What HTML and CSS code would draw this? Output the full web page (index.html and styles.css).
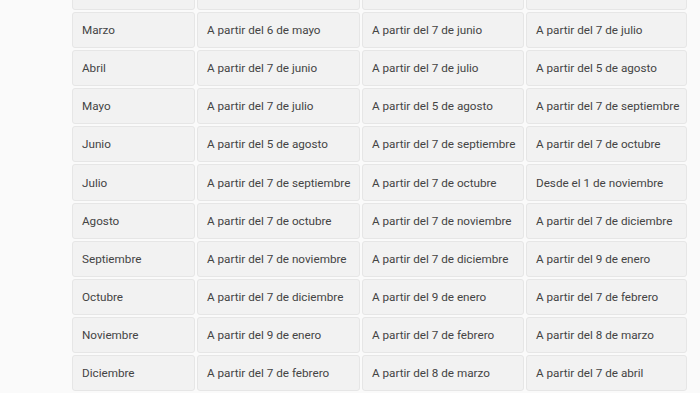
FILE: index.html
```html
<!DOCTYPE html>
<html lang="es">
<head>
<meta charset="utf-8">
<title>Calendario</title>
<link rel="stylesheet" href="styles.css">
</head>
<body>
<div class="page">
  <div class="grid">
    <div class="cell"></div><div class="cell"></div><div class="cell"></div><div class="cell"></div>
    <div class="cell">Marzo</div><div class="cell">A partir del 6 de mayo</div><div class="cell">A partir del 7 de junio</div><div class="cell">A partir del 7 de julio</div>
    <div class="cell">Abril</div><div class="cell">A partir del 7 de junio</div><div class="cell">A partir del 7 de julio</div><div class="cell">A partir del 5 de agosto</div>
    <div class="cell">Mayo</div><div class="cell">A partir del 7 de julio</div><div class="cell">A partir del 5 de agosto</div><div class="cell">A partir del 7 de septiembre</div>
    <div class="cell">Junio</div><div class="cell">A partir del 5 de agosto</div><div class="cell">A partir del 7 de septiembre</div><div class="cell">A partir del 7 de octubre</div>
    <div class="cell">Julio</div><div class="cell">A partir del 7 de septiembre</div><div class="cell">A partir del 7 de octubre</div><div class="cell">Desde el 1 de noviembre</div>
    <div class="cell">Agosto</div><div class="cell">A partir del 7 de octubre</div><div class="cell">A partir del 7 de noviembre</div><div class="cell">A partir del 7 de diciembre</div>
    <div class="cell">Septiembre</div><div class="cell">A partir del 7 de noviembre</div><div class="cell">A partir del 7 de diciembre</div><div class="cell">A partir del 9 de enero</div>
    <div class="cell">Octubre</div><div class="cell">A partir del 7 de diciembre</div><div class="cell">A partir del 9 de enero</div><div class="cell">A partir del 7 de febrero</div>
    <div class="cell">Noviembre</div><div class="cell">A partir del 9 de enero</div><div class="cell">A partir del 7 de febrero</div><div class="cell">A partir del 8 de marzo</div>
    <div class="cell">Diciembre</div><div class="cell">A partir del 7 de febrero</div><div class="cell">A partir del 8 de marzo</div><div class="cell">A partir del 7 de abril</div>
  </div>
</div>
</body>
</html>
```
FILE: styles.css
```css
html, body {
  margin: 0;
  padding: 0;
  background: #fafafa;
  overflow: hidden;
}
.page {
  padding-left: 72px;
  margin-top: -26px;
  font-family: Roboto, "Liberation Sans", sans-serif;
  font-size: 11.7px;
  color: #444444;
}
.grid {
  display: grid;
  grid-template-columns: 123px 163px 162px 161px;
  grid-auto-rows: 36.1px;
  gap: 2px;
}
.cell {
  box-sizing: border-box;
  background: #f2f2f2;
  border: 1px solid #e6e6e6;
  border-radius: 3px;
  padding: 0 9px;
  display: flex;
  align-items: center;
  white-space: nowrap;
}
```
